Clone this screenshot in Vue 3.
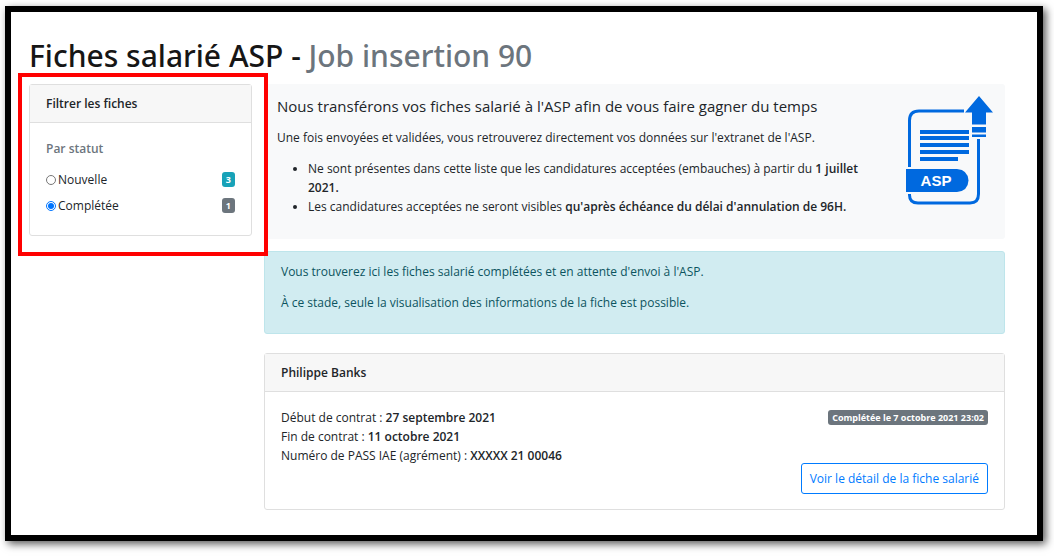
<script setup>
import { ref } from 'vue'

const status = ref('completee')
const filters = [
  { id: 'nouvelle', label: 'Nouvelle', count: 3, tone: 'info' },
  { id: 'completee', label: 'Complétée', count: 1, tone: 'secondary' },
]
const facts = [
  { label: 'Début de contrat', value: '27 septembre 2021' },
  { label: 'Fin de contrat', value: '11 octobre 2021' },
  { label: 'Numéro de PASS IAE (agrément)', value: 'XXXXX 21 00046' },
]
</script>

<template>
  <div class="frame">
    <h1 class="title">Fiches salarié ASP - <span class="muted">Job insertion 90</span></h1>
    <div class="layout">
      <aside class="sidebar">
        <form class="card">
          <h2 class="card-header">Filtrer les fiches</h2>
          <fieldset class="filters">
            <legend class="legend">Par statut</legend>
            <div v-for="f in filters" :key="f.id" class="filter">
              <input :id="f.id" v-model="status" class="radio" type="radio" name="status" :value="f.id" />
              <label class="filter-label" :for="f.id">{{ f.label }}</label>
              <span class="badge" :class="f.tone">{{ f.count }}</span>
            </div>
          </fieldset>
        </form>
        <div class="highlight"></div>
      </aside>

      <main class="main">
        <section class="hero">
          <div class="hero-text">
            <h2 class="hero-title">Nous transférons vos fiches salarié à l'ASP afin de vous faire gagner du temps</h2>
            <p class="para">Une fois envoyées et validées, vous retrouverez directement vos données sur l'extranet de l'ASP.</p>
            <ul class="list">
              <li>Ne sont présentes dans cette liste que les candidatures acceptées (embauches) à partir du <b>1 juillet 2021.</b></li>
              <li>Les candidatures acceptées ne seront visibles <b>qu'après échéance du délai d'annulation de 96H.</b></li>
            </ul>
          </div>
          <svg class="hero-icon" width="88" height="110" viewBox="0 0 88 110" role="img" aria-label="ASP">
            <g fill="none" stroke="#0069df" stroke-width="3">
              <path d="M58 15H13Q3.500 15 3.500 24.500V71" />
              <path d="M3.500 98V99Q3.500 107 12 107H64Q72.500 107 72.500 98V43" />
            </g>
            <g fill="#0069df">
              <path d="M73 0L87 16.500H80V28.500H66V16.500H59Z" />
              <path d="M66 31H80V36.500H66ZM66 38.500H80V41H66Z" />
              <path d="M14 34H63V38H14ZM14 40H63V44H14ZM14 47H63V51H14ZM14 54H63V58H14ZM14 61H52V65H14Z" />
              <path d="M0 73H51Q62 74 62.500 84.500Q62 95 51 96H0Z" />
            </g>
            <text class="icon-text" x="30" y="90" text-anchor="middle">ASP</text>
          </svg>
        </section>

        <section class="alert">
          <p class="para">Vous trouverez ici les fiches salarié complétées et en attente d'envoi à l'ASP.</p>
          <p class="para">À ce stade, seule la visualisation des informations de la fiche est possible.</p>
        </section>

        <article class="card record">
          <h2 class="card-header">Philippe Banks</h2>
          <div class="record-body">
            <div>
              <div v-for="f in facts" :key="f.label">{{ f.label }} : <b>{{ f.value }}</b></div>
            </div>
            <div class="record-side">
              <span class="badge secondary">Complétée le 7 octobre 2021 23:02</span>
              <a class="button" href="#">Voir le détail de la fiche salarié</a>
            </div>
          </div>
        </article>
      </main>
    </div>
  </div>
</template>

<style>
body {
  background: #fff;
}
</style>

<style scoped>
.frame {
  box-sizing: border-box;
  min-height: calc(100vh - 22px);
  margin: 6px 11px 16px 5px;
  padding: 26px 32px 20px 18px;
  border: 6px solid #000;
  background: #fff;
  box-shadow: 3px 3px 8px rgba(0, 0, 0, 0.65);
  color: #212529;
  font: 12px/19px "Open Sans", "Noto Sans", sans-serif;
}
b {
  font-weight: 600;
}
.title {
  margin: 0 0 10px;
  font-family: "Noto Sans", "Open Sans", sans-serif;
  font-size: 30px;
  line-height: 36px;
  font-weight: 500;
  color: #161616;
}
.muted {
  color: #6c757d;
}
.layout {
  display: grid;
  grid-template-columns: 223px minmax(0, 1fr);
  gap: 12px;
  align-items: start;
}
.sidebar {
  position: relative;
}
.highlight {
  position: absolute;
  inset: -11px -16px -20px -11px;
  border: 4px solid #f00;
  pointer-events: none;
}
.card {
  border: 1px solid #dfdfdf;
  border-radius: 3px;
  background: #fff;
}
.card-header {
  margin: 0;
  padding: 9px 16px;
  border-bottom: 1px solid #dfdfdf;
  background: #f7f7f7;
  font-size: 12px;
  line-height: 19px;
  font-weight: 600;
}
.filters {
  margin: 0;
  padding: 0 16px 13px;
  border: 0;
}
.legend {
  padding: 16px 0 12px;
  color: #6c757d;
  font-weight: 600;
}
.filter {
  display: flex;
  align-items: center;
  margin-bottom: 7px;
}
.radio {
  width: 10px;
  height: 10px;
  margin: 0 2px 0 0;
  accent-color: #0075ff;
}
.filter-label {
  flex: 1;
}
.badge {
  padding: 2px 4px;
  border-radius: 3px;
  color: #fff;
  font-size: 9px;
  line-height: 11px;
  font-weight: 700;
}
.info {
  background: #17a2b8;
}
.secondary {
  background: #6c757d;
}
.hero {
  display: flex;
  justify-content: space-between;
  align-items: flex-start;
  padding: 12px 11px 23px 13px;
  border-radius: 3px;
  background: #f8f9fa;
}
.hero-text {
  max-width: 590px;
}
.hero-title {
  margin: 0 0 12px;
  font-size: 15px;
  line-height: 20px;
  font-weight: 500;
}
.para {
  margin: 0 0 12px;
}
.list {
  margin: 0;
  padding-left: 31px;
}
.hero-icon {
  flex: none;
}
.icon-text {
  fill: #fff;
  font: bold 15px "Liberation Sans", sans-serif;
}
.alert {
  margin: 12px 0 19px;
  padding: 10px 16px 9px;
  border: 1px solid #bee5eb;
  border-radius: 3px;
  background: #d1ecf1;
  color: #0c5460;
}
.record-body {
  display: flex;
  justify-content: space-between;
  padding: 16px 16px 15px;
}
.record-side {
  display: flex;
  flex-direction: column;
  align-items: flex-end;
  gap: 38px;
  padding-top: 2px;
}
.button {
  padding: 5px 8px;
  border: 1px solid #007bff;
  border-radius: 3px;
  color: #007bff;
  text-decoration: none;
}
</style>
